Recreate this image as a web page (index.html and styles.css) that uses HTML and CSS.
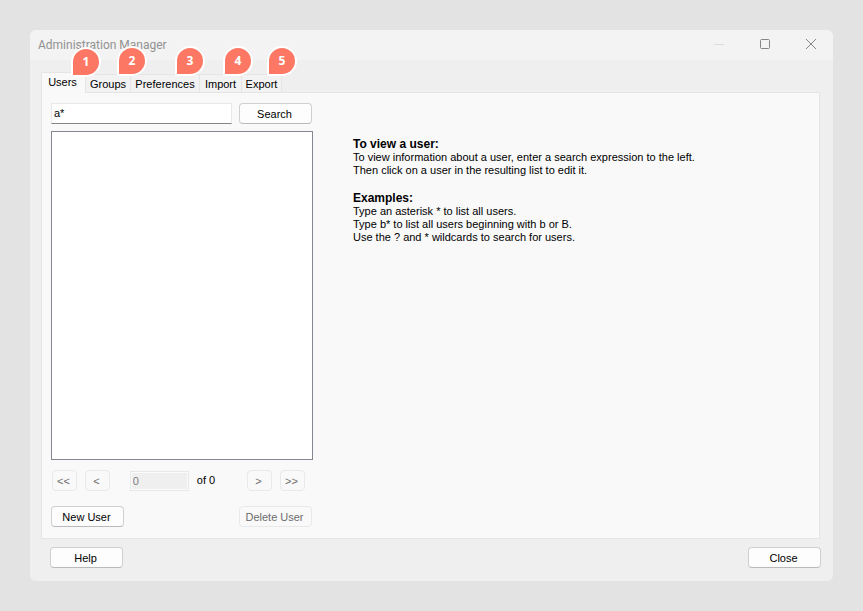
FILE: index.html
```html
<!DOCTYPE html>
<html lang="en">
<head>
<meta charset="utf-8">
<title>Administration Manager</title>
<link rel="stylesheet" href="styles.css">
</head>
<body>
<main class="window">
  <header class="titlebar">
    <h1 class="title">Administration Manager</h1>
    <div class="window-controls">
      <button class="window-button minimize" type="button" aria-label="Minimize"><svg width="12" height="12" viewBox="0 0 12 12"><path d="M1 5.5h10"/></svg></button>
      <button class="window-button" type="button" aria-label="Maximize"><svg width="12" height="12" viewBox="0 0 12 12"><rect x="1.5" y="0.5" width="9" height="9" rx="1"/></svg></button>
      <button class="window-button" type="button" aria-label="Close window"><svg width="12" height="12" viewBox="0 0 12 12"><path d="M1 0l10 10M11 0L1 10"/></svg></button>
    </div>
  </header>
  <div class="content">
    <div class="tabs" role="tablist">
      <button class="tab users active" type="button" role="tab" aria-selected="true">Users<span class="badge">1</span></button>
      <button class="tab groups" type="button" role="tab">Groups<span class="badge">2</span></button>
      <button class="tab preferences" type="button" role="tab">Preferences<span class="badge">3</span></button>
      <button class="tab import" type="button" role="tab">Import<span class="badge">4</span></button>
      <button class="tab export" type="button" role="tab">Export<span class="badge">5</span></button>
    </div>
    <div class="panel" role="tabpanel">
      <section class="browser">
        <form class="search">
          <input class="search-field" type="text" value="a*" aria-label="Search expression">
          <button class="button" type="button">Search</button>
        </form>
        <div class="results" role="listbox" aria-label="Users"></div>
        <div class="pager">
          <div class="pager-group">
            <button class="button small" type="button" disabled>&lt;&lt;</button>
            <button class="button small" type="button" disabled>&lt;</button>
          </div>
          <label class="page">
            <input class="page-field" type="text" value="0" disabled>
            <span>of 0</span>
          </label>
          <div class="pager-group">
            <button class="button small" type="button" disabled>&gt;</button>
            <button class="button small" type="button" disabled>&gt;&gt;</button>
          </div>
        </div>
        <div class="actions">
          <button class="button" type="button">New User</button>
          <button class="button" type="button" disabled>Delete User</button>
        </div>
      </section>
      <section class="help">
        <h2>To view a user:</h2>
        <p>To view information about a user, enter a search expression to the left.<br>Then click on a user in the resulting list to edit it.</p>
        <h2>Examples:</h2>
        <p>Type an asterisk * to list all users.<br>Type b* to list all users beginning with b or B.<br>Use the ? and * wildcards to search for users.</p>
      </section>
    </div>
  </div>
  <footer class="footer">
    <button class="button" type="button">Help</button>
    <button class="button" type="button">Close</button>
  </footer>
</main>
</body>
</html>
```
FILE: styles.css
```css
* {
  box-sizing: border-box;
}

body {
  margin: 0;
  padding: 30px;
  min-height: 100vh;
  display: flex;
  background: #e3e3e3;
  color: #000;
  font: 11px/13px "Liberation Sans", Arial, sans-serif;
}

button,
input {
  font: inherit;
  color: inherit;
  margin: 0;
}

.window {
  flex: 1;
  display: flex;
  flex-direction: column;
  background: #efefef;
  border-radius: 6px;
  overflow: hidden;
}

.titlebar {
  display: flex;
  justify-content: space-between;
  height: 30px;
  background: #f3f3f3;
  padding-left: 8px;
}

.title {
  margin: 0;
  font: 12px/30px Roboto, "Noto Sans", sans-serif;
  color: #929292;
}

.window-controls {
  display: flex;
}

.window-button {
  width: 46px;
  padding: 0 0 0 2px;
  border: 0;
  background: none;
  display: flex;
  align-items: center;
  justify-content: center;
}

.window-button svg {
  fill: none;
  stroke: #858585;
}

.minimize svg {
  stroke: #dcdcdc;
}

.content {
  flex: 1;
  display: flex;
  flex-direction: column;
  padding: 12px 13px 0 11px;
}

.tabs {
  display: flex;
  align-items: flex-end;
  height: 20px;
}

.tab {
  position: relative;
  height: 18px;
  padding: 2px 0 0;
  border: solid #e5e5e5;
  border-width: 1px 1px 0 0;
  background: #f2f2f2;
  text-align: center;
}

.tab.active {
  z-index: 1;
  height: 21px;
  margin-bottom: -1px;
  padding: 0 2px 2px 0;
  border-left-width: 1px;
  background: #f9f9f9;
}

.users {
  width: 45px;
}

.groups {
  width: 45px;
}

.preferences {
  width: 69px;
}

.import {
  width: 42px;
}

.export {
  width: 40px;
}

.badge {
  position: absolute;
  bottom: 16px;
  left: 31px;
  width: 30px;
  height: 30px;
  border: 2px solid #fff;
  border-radius: 15px 15px 15px 2px;
  background: #fc7865;
  color: #fff;
  font: bold 12px/26px "Open Sans", "Noto Sans", sans-serif;
  z-index: 2;
}

.users .badge {
  left: 29px;
}

.preferences .badge {
  left: 44px;
}

.import .badge {
  left: 23px;
}

.export .badge {
  left: 25px;
}

.panel {
  flex: 1;
  display: flex;
  gap: 40px;
  padding: 10px 9px 11px;
  border: 1px solid #e5e5e5;
  background: #f9f9f9;
}

.browser {
  width: 262px;
  flex: none;
  display: flex;
  flex-direction: column;
}

.search {
  display: flex;
  gap: 7px;
  padding-right: 1px;
  margin-bottom: 7px;
}

.search-field {
  flex: 1;
  min-width: 0;
  padding: 0 2px;
  border: 1px solid #e8e8e8;
  border-bottom-color: #858585;
  background: #fff;
}

.button {
  width: 73px;
  height: 21px;
  padding: 2px 2px 0 0;
  border: 1px solid #d0d0d0;
  border-bottom-color: #bababa;
  border-radius: 4px;
  background: #fdfdfd;
}

.button:disabled {
  border-color: #e9e9e9;
  background: #f9f9f9;
  color: #6c6c6c;
}

.button.small {
  width: 25px;
}

.results {
  flex: 1;
  border: 1px solid #828790;
  background: #fff;
}

.pager {
  display: flex;
  justify-content: space-between;
  margin-top: 10px;
  padding: 0 8px 0 1px;
}

.pager-group {
  display: flex;
  gap: 8px;
}

.page {
  display: flex;
  align-items: center;
  gap: 8px;
  margin-right: 12px;
}

.page-field {
  width: 59px;
  height: 20px;
  padding: 0 2px;
  border: 1px solid #e8e8e8;
  outline: 1px solid #fbfbfb;
  outline-offset: -2px;
  background: #efefef;
  color: #7d7d7d;
}

.actions {
  display: flex;
  justify-content: space-between;
  margin-top: 15px;
  padding-right: 1px;
}

.help {
  flex: 1;
  padding-top: 34px;
}

.help h2 {
  margin: 0;
  font-size: 12px;
  line-height: 14px;
}

.help p {
  margin: 0 0 14px;
}

.footer {
  display: flex;
  justify-content: space-between;
  padding: 8px 12px 13px 20px;
}
```
